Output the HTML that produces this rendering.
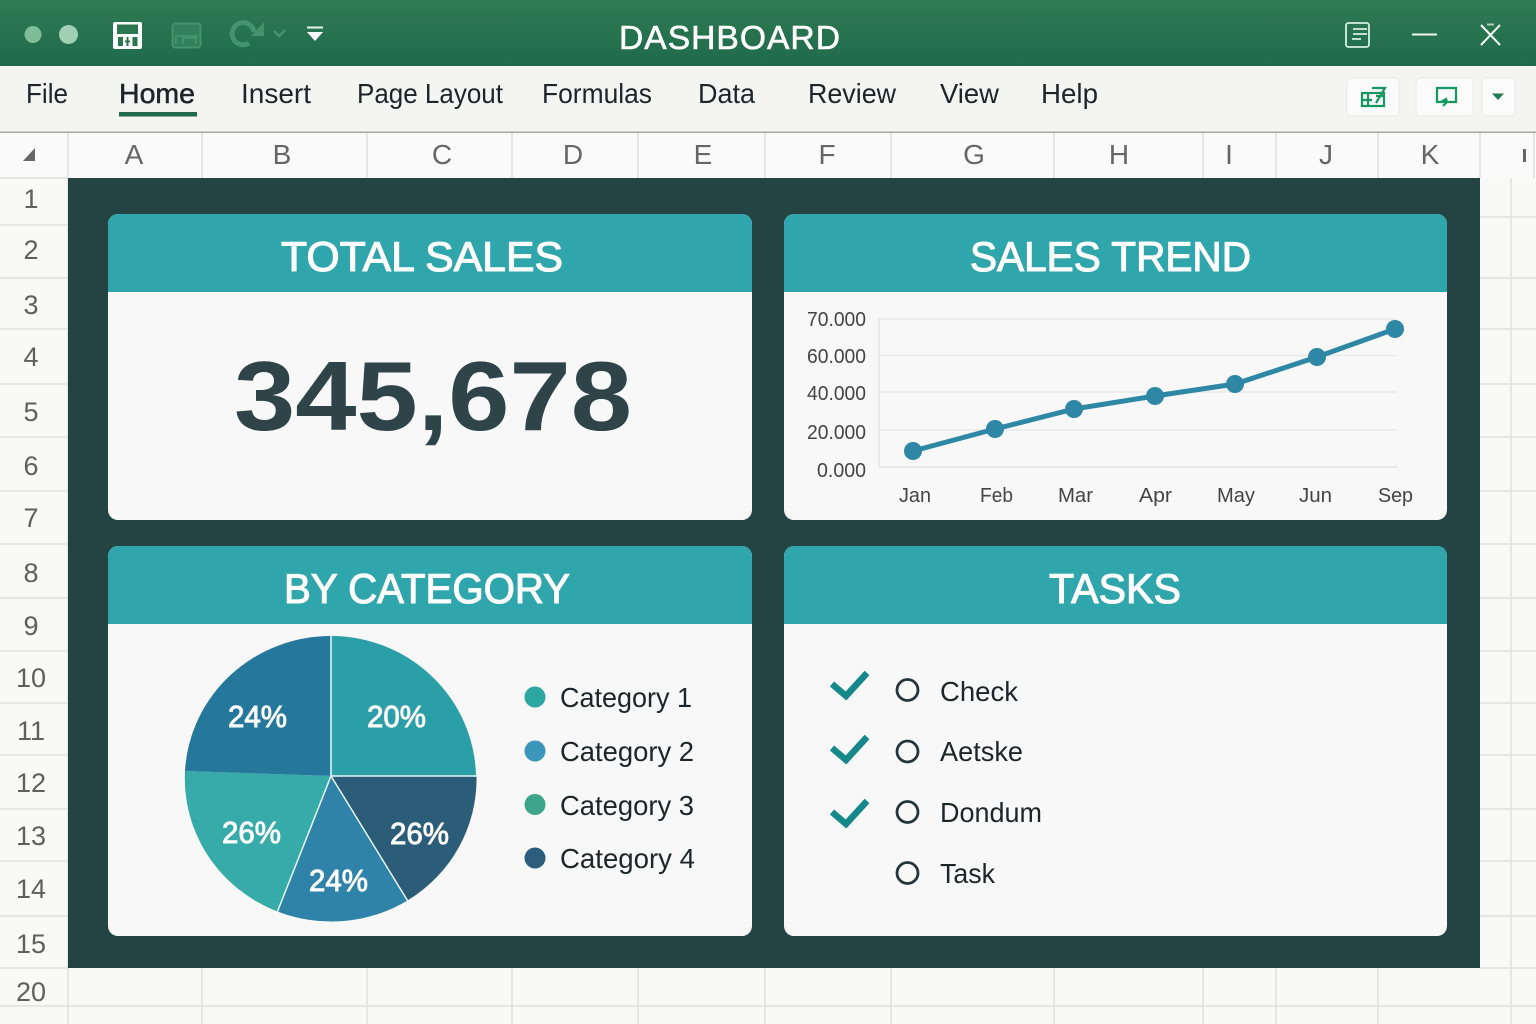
<!DOCTYPE html>
<html><head><meta charset="utf-8"><title>Dashboard</title>
<style>
html,body{margin:0;padding:0;background:#f8f8f7}
svg{display:block}
text{font-family:"Liberation Sans",sans-serif}
.m{font-size:28px;fill:#1e2428}
.h{font-size:28px;fill:#666;text-anchor:middle}
.r{font-size:27px;fill:#5f5f5f;text-anchor:middle}
.t{font-size:42px;fill:#fff;stroke:#fff;stroke-width:1.100}
.y{font-size:20px;fill:#444}
.x{font-size:20px;fill:#444}
.p{font-size:31px;fill:#fff;stroke:#fff;stroke-width:.9}
.l{font-size:28px;fill:#1d2528}
.g{stroke:#e0e0df;stroke-width:1.500}
</style></head><body>
<svg width="1536" height="1024" viewBox="0 0 1536 1024" xmlns="http://www.w3.org/2000/svg">
<defs>
<linearGradient id="tb" x1="0" y1="0" x2="0" y2="1"><stop offset="0" stop-color="#2f7b52"/><stop offset="1" stop-color="#1f6a4b"/></linearGradient>
<clipPath id="c1"><rect x="108" y="214" width="644" height="306" rx="10"/></clipPath>
<clipPath id="c2"><rect x="784" y="214" width="663" height="306" rx="10"/></clipPath>
<clipPath id="c3"><rect x="108" y="546" width="644" height="390" rx="10"/></clipPath>
<clipPath id="c4"><rect x="784" y="546" width="663" height="390" rx="10"/></clipPath>
</defs>
<rect width="1536" height="1024" fill="#f9f9f8"/>

<!-- title bar -->
<rect width="1536" height="66" fill="url(#tb)"/>
<circle cx="33" cy="34.500" r="8.500" fill="#7fbd98"/>
<circle cx="68.500" cy="34.500" r="9.500" fill="#a0d0b2"/>
<!-- save -->
<rect x="113" y="22" width="29" height="27" rx="2" fill="#fff"/>
<rect x="117" y="24.500" width="21" height="9.500" fill="#2b7650"/>
<rect x="118" y="37" width="5" height="9" fill="#2b7650"/>
<rect x="132.500" y="37" width="5" height="9" fill="#2b7650"/>
<path d="M127.500 37v9M125 41.500h5" stroke="#2b7650" stroke-width="2"/>
<!-- disabled save -->
<rect x="172.500" y="23.500" width="28" height="24" rx="3" fill="#33805a" stroke="#44936b" stroke-width="2"/>
<path d="M176 44v-8h20v8M176 36h22M183 44v-6h13v6" fill="none" stroke="#47946c" stroke-width="1.800"/>
<!-- redo -->
<path d="M254 32a11 11 0 1 0-5 11" fill="none" stroke="#44936b" stroke-width="5"/>
<path d="M264 22v14h-13z" fill="#44936b"/>
<path d="M274 31l5 5 6-6" fill="none" stroke="#44936b" stroke-width="2.500"/>
<!-- qat dropdown -->
<path d="M307 27.500h16" stroke="#e8f2ec" stroke-width="2"/>
<path d="M307 32h16l-8 9z" fill="#fff"/>
<text x="730" y="49" text-anchor="middle" textLength="222" lengthAdjust="spacingAndGlyphs" style="font-size:33px;fill:#fff;stroke:#fff;stroke-width:.6;letter-spacing:1px">DASHBOARD</text>
<!-- right title icons -->
<rect x="1346" y="23" width="23" height="24" rx="2.500" fill="none" stroke="#d8f0e2" stroke-width="1.800"/>
<path d="M1353 29h14M1353 34h14M1352 39h9" stroke="#d8f0e2" stroke-width="1.800"/>
<path d="M1412 34.500h25" stroke="#f0f7f3" stroke-width="2"/>
<path d="M1481 25l19 20M1500 25l-19 20" stroke="#f4faf6" stroke-width="2"/>
<path d="M1487 24.500h7" stroke="#a8d0ba" stroke-width="2"/>

<!-- ribbon -->
<rect y="66" width="1536" height="66" fill="#f4f4f3"/>
<rect y="131.500" width="1536" height="2" fill="#a8a8a8"/>
<text class="m" x="26" y="103" textLength="42" lengthAdjust="spacingAndGlyphs">File</text>
<text class="m" x="119" y="103" textLength="76" lengthAdjust="spacingAndGlyphs" style="font-weight:500;stroke:#1e2428;stroke-width:.5">Home</text>
<rect x="119" y="112" width="78" height="4.500" fill="#1f6a4b"/>
<text class="m" x="241" y="103" textLength="70" lengthAdjust="spacingAndGlyphs">Insert</text>
<text class="m" x="357" y="103" textLength="146" lengthAdjust="spacingAndGlyphs">Page Layout</text>
<text class="m" x="542" y="103" textLength="110" lengthAdjust="spacingAndGlyphs">Formulas</text>
<text class="m" x="698" y="103" textLength="57" lengthAdjust="spacingAndGlyphs">Data</text>
<text class="m" x="808" y="103" textLength="88" lengthAdjust="spacingAndGlyphs">Review</text>
<text class="m" x="940" y="103" textLength="59" lengthAdjust="spacingAndGlyphs">View</text>
<text class="m" x="1041" y="103" textLength="57" lengthAdjust="spacingAndGlyphs">Help</text>
<!-- ribbon buttons -->
<g fill="#fbfbfb" stroke="#e9e9e9">
<rect x="1347" y="78" width="52" height="38" rx="4"/>
<rect x="1416" y="78" width="57" height="38" rx="4"/>
<rect x="1482" y="78" width="33" height="38" rx="4"/>
</g>
<g fill="none" stroke="#149860" stroke-width="2.200">
<path d="M1362 93h22v13h-22zM1362 100h10M1368 93v13"/>
<path d="M1372 88h13l-9 15M1376 96h9"/>
<path d="M1437 88h19v14h-19zM1441 102l5-3 1 3-4 4"/>
</g>
<path d="M1492 93.500h12l-6 6.500z" fill="#1f7a50"/>

<!-- column headers -->
<rect y="133" width="1536" height="45" fill="#fafafa"/>
<g class="g">
<path d="M68 133v45M202 133v45M367 133v45M512 133v45M638 133v45M765 133v45M891 133v45M1054 133v45M1203 133v45M1276 133v45M1378 133v45M1480 133v45"/>
<path d="M1534 133v45"/>
</g>
<path d="M23 161l12-13v13z" fill="#666"/>
<text class="h" x="134" y="164">A</text>
<text class="h" x="282" y="164">B</text>
<text class="h" x="442" y="164">C</text>
<text class="h" x="573" y="164">D</text>
<text class="h" x="703" y="164">E</text>
<text class="h" x="827" y="164">F</text>
<text class="h" x="974" y="164">G</text>
<text class="h" x="1119" y="164">H</text>
<text class="h" x="1229" y="164">I</text>
<text class="h" x="1326" y="164">J</text>
<text class="h" x="1430" y="164">K</text>
<rect x="1523" y="149" width="3" height="13" fill="#666"/>

<!-- grid -->
<g class="g">
<path d="M0 178h68M0 225h68M0 278h68M0 329h68M0 384h68M0 437h68M0 491h68M0 544h68M0 598h68M0 651h68M0 703h68M0 755h68M0 809h68M0 861h68M0 916h68M0 968h68M0 1006h1536"/>
<path d="M68 178v846"/>
<path d="M1480 217h56M1480 278h56M1480 329h56M1480 384h56M1480 437h56M1480 491h56M1480 544h56M1480 598h56M1480 651h56M1480 703h56M1480 755h56M1480 809h56M1480 861h56M1480 916h56M1480 968h56"/>
<path d="M1511 178v846"/>
<path d="M202 968v56M367 968v56M512 968v56M638 968v56M765 968v56M891 968v56M1054 968v56M1203 968v56M1276 968v56M1378 968v56"/>
</g>
<text class="r" x="31" y="208">1</text>
<text class="r" x="31" y="259">2</text>
<text class="r" x="31" y="314">3</text>
<text class="r" x="31" y="366">4</text>
<text class="r" x="31" y="421">5</text>
<text class="r" x="31" y="475">6</text>
<text class="r" x="31" y="527">7</text>
<text class="r" x="31" y="582">8</text>
<text class="r" x="31" y="635">9</text>
<text class="r" x="31" y="687">10</text>
<text class="r" x="31" y="740">11</text>
<text class="r" x="31" y="792">12</text>
<text class="r" x="31" y="845">13</text>
<text class="r" x="31" y="898">14</text>
<text class="r" x="31" y="953">15</text>
<text class="r" x="31" y="1001">20</text>

<!-- dashboard bg -->
<rect x="68" y="178" width="1412" height="790" fill="#234442"/>

<!-- cards -->
<g clip-path="url(#c1)"><rect x="108" y="214" width="644" height="306" fill="#f8f8f8"/><rect x="108" y="214" width="644" height="78" fill="#2fa5ac"/></g>
<g clip-path="url(#c2)"><rect x="784" y="214" width="663" height="306" fill="#f8f8f8"/><rect x="784" y="214" width="663" height="78" fill="#2fa5ac"/></g>
<g clip-path="url(#c3)"><rect x="108" y="546" width="644" height="390" fill="#f8f8f8"/><rect x="108" y="546" width="644" height="78" fill="#2fa5ac"/></g>
<g clip-path="url(#c4)"><rect x="784" y="546" width="663" height="390" fill="#f8f8f8"/><rect x="784" y="546" width="663" height="78" fill="#2fa5ac"/></g>

<text class="t" x="281" y="271" textLength="282" lengthAdjust="spacingAndGlyphs">TOTAL SALES</text>
<text class="t" x="970" y="271" textLength="281" lengthAdjust="spacingAndGlyphs">SALES TREND</text>
<text class="t" x="284" y="603" textLength="286" lengthAdjust="spacingAndGlyphs">BY CATEGORY</text>
<text class="t" x="1049" y="603" textLength="132" lengthAdjust="spacingAndGlyphs">TASKS</text>

<text x="234" y="430" textLength="398" lengthAdjust="spacingAndGlyphs" style="font-size:98px;font-weight:700;fill:#2e4448">345,678</text>

<!-- line chart -->
<path d="M879 319v148" stroke="#e6e6e6" stroke-width="1.500"/>
<g stroke="#e8e8e8" stroke-width="1.500">
<path d="M879 319h518M879 355.500h518M879 392h518M879 430h518"/>
<path d="M879 467h518" stroke="#e2e2e2"/>
</g>
<text class="y" x="807" y="326" textLength="59" lengthAdjust="spacingAndGlyphs">70.000</text>
<text class="y" x="807" y="363" textLength="59" lengthAdjust="spacingAndGlyphs">60.000</text>
<text class="y" x="807" y="400" textLength="59" lengthAdjust="spacingAndGlyphs">40.000</text>
<text class="y" x="807" y="439" textLength="59" lengthAdjust="spacingAndGlyphs">20.000</text>
<text class="y" x="817" y="477" textLength="49" lengthAdjust="spacingAndGlyphs">0.000</text>
<path d="M913 451L995 429 1074 409 1155 396 1235 384 1317 357 1395 329" fill="none" stroke="#2f87a6" stroke-width="5"/>
<g fill="#2f87a6">
<circle cx="913" cy="451" r="9"/><circle cx="995" cy="429" r="9"/><circle cx="1074" cy="409" r="9"/><circle cx="1155" cy="396" r="9"/><circle cx="1235" cy="384" r="9"/><circle cx="1317" cy="357" r="9"/><circle cx="1395" cy="329" r="9"/>
</g>
<text class="x" x="899" y="502" textLength="32" lengthAdjust="spacingAndGlyphs">Jan</text>
<text class="x" x="980" y="502" textLength="33" lengthAdjust="spacingAndGlyphs">Feb</text>
<text class="x" x="1058" y="502" textLength="35" lengthAdjust="spacingAndGlyphs">Mar</text>
<text class="x" x="1139" y="502" textLength="33" lengthAdjust="spacingAndGlyphs">Apr</text>
<text class="x" x="1217" y="502" textLength="38" lengthAdjust="spacingAndGlyphs">May</text>
<text class="x" x="1299" y="502" textLength="33" lengthAdjust="spacingAndGlyphs">Jun</text>
<text class="x" x="1378" y="502" textLength="35" lengthAdjust="spacingAndGlyphs">Sep</text>

<!-- pie -->
<path d="M331 776V636A145 143 0 0 1 476 776Z" fill="#2a9fa8"/>
<path d="M331 776H476.500A146 143 0 0 1 407.500 900.500Z" fill="#2b5c78"/>
<path d="M331 776L407.500 900.500A146 143 0 0 1 277.500 911.500Z" fill="#2f83a8"/>
<path d="M331 776L277.500 911.500A146 143 0 0 1 185 771Z" fill="#37aba9"/>
<path d="M331 776L185 771A146 143 0 0 1 331 636Z" fill="#25789c"/>
<path d="M331 636V776H476.500M331 776L407.500 900.500M331 776L277.500 911.500" fill="none" stroke="#eafafa" stroke-width="1.500"/>
<text class="p" x="228" y="727" textLength="59" lengthAdjust="spacingAndGlyphs">24%</text>
<text class="p" x="367" y="727" textLength="59" lengthAdjust="spacingAndGlyphs">20%</text>
<text class="p" x="222" y="843" textLength="59" lengthAdjust="spacingAndGlyphs">26%</text>
<text class="p" x="390" y="844" textLength="59" lengthAdjust="spacingAndGlyphs">26%</text>
<text class="p" x="309" y="891" textLength="59" lengthAdjust="spacingAndGlyphs">24%</text>

<!-- legend -->
<circle cx="535" cy="697" r="10.500" fill="#2ba6a0"/>
<circle cx="535" cy="751" r="10.500" fill="#3b96bc"/>
<circle cx="535" cy="804.500" r="10.500" fill="#3fa58a"/>
<circle cx="535" cy="858" r="10.500" fill="#2c5d7c"/>
<text class="l" x="560" y="707" textLength="132" lengthAdjust="spacingAndGlyphs">Category 1</text>
<text class="l" x="560" y="761" textLength="134" lengthAdjust="spacingAndGlyphs">Category 2</text>
<text class="l" x="560" y="815" textLength="134" lengthAdjust="spacingAndGlyphs">Category 3</text>
<text class="l" x="560" y="868" textLength="135" lengthAdjust="spacingAndGlyphs">Category 4</text>

<!-- tasks -->
<g fill="none" stroke="#16888a" stroke-width="6.500">
<path d="M832 684l14 12 21-23"/>
<path d="M832 748l14 12 21-23"/>
<path d="M832 812l14 12 21-23"/>
</g>
<g fill="none" stroke="#24363a" stroke-width="2.800">
<circle cx="907.500" cy="690" r="10.500"/>
<circle cx="907.500" cy="751.500" r="10.500"/>
<circle cx="907.500" cy="812" r="10.500"/>
<circle cx="907.500" cy="873" r="10.500"/>
</g>
<text class="l" x="940" y="701" textLength="78" lengthAdjust="spacingAndGlyphs">Check</text>
<text class="l" x="940" y="761" textLength="83" lengthAdjust="spacingAndGlyphs">Aetske</text>
<text class="l" x="940" y="822" textLength="102" lengthAdjust="spacingAndGlyphs">Dondum</text>
<text class="l" x="940" y="883" textLength="55" lengthAdjust="spacingAndGlyphs">Task</text>
</svg>
</body></html>
